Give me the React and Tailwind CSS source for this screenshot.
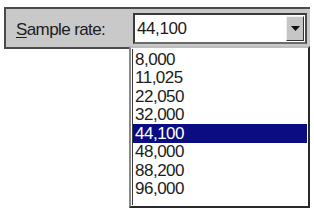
const font = { fontFamily: '"Liberation Sans", Arial, sans-serif' }

const rates = ['8,000', '11,025', '22,050', '32,000', '44,100', '48,000', '88,200', '96,000']
const SELECTED = 4

export default function App() {
  return (
    <div className="relative w-[314px] h-[209px] bg-white overflow-hidden text-[#1c1c1c]" style={font}>
      {/* settings strip */}
      <div className="ml-[4px] mt-[7px] w-[306px] h-[42px] bg-[#c9c9c9] border-t-2 border-l-2 border-b-2 border-[#4a4a4a] flex items-center">
        <span className="ml-[10px] mt-[2px] text-[17px] tracking-[-0.6px] leading-none">
          <span className="underline underline-offset-2">S</span>ample rate:
        </span>

        {/* combo box */}
        <div className="ml-auto mr-[3px] w-[174px] h-[31px] bg-white border-2 border-t-[#3a3a3a] border-l-[#3a3a3a] border-r-[#4a4a4a] border-b-[#6a6a6a] flex items-center">
          <span className="ml-[2px] mt-px text-[17px] tracking-[-0.4px] leading-none">44,100</span>
          <div className="ml-auto mr-[1px] w-[18px] h-[25px] bg-[#c6c6c6] border border-t-[#f0f0f0] border-l-[#f0f0f0] border-r-[#303030] border-b-[#303030] flex items-center justify-center">
            <svg width="9" height="5" viewBox="0 0 9 5">
              <path d="M0 0h9L4.5 5z" fill="#111" />
            </svg>
          </div>
        </div>
      </div>

      {/* open drop-down list */}
      <div className="absolute left-[129px] top-[46px] w-[181px] h-[162px] bg-white border-2 border-t-[#bdbdbd] border-l-[#8a8a8a] border-r-[#2a2a2a] border-b-[#2a2a2a] p-px">
        <div className="h-full border-l border-[#3a3a3a] flex flex-col pt-px">
          {rates.map((r, i) => (
            <div
              key={r}
              className={
                i === SELECTED
                  ? 'h-[18.5px] flex items-center pl-[2px] bg-[#0c0c82] text-white text-[17px] tracking-[-0.5px] leading-none'
                  : 'h-[18.5px] flex items-center pl-[2px] text-[17px] tracking-[-0.5px] leading-none'
              }
            >
              {r}
            </div>
          ))}
        </div>
      </div>
    </div>
  )
}
